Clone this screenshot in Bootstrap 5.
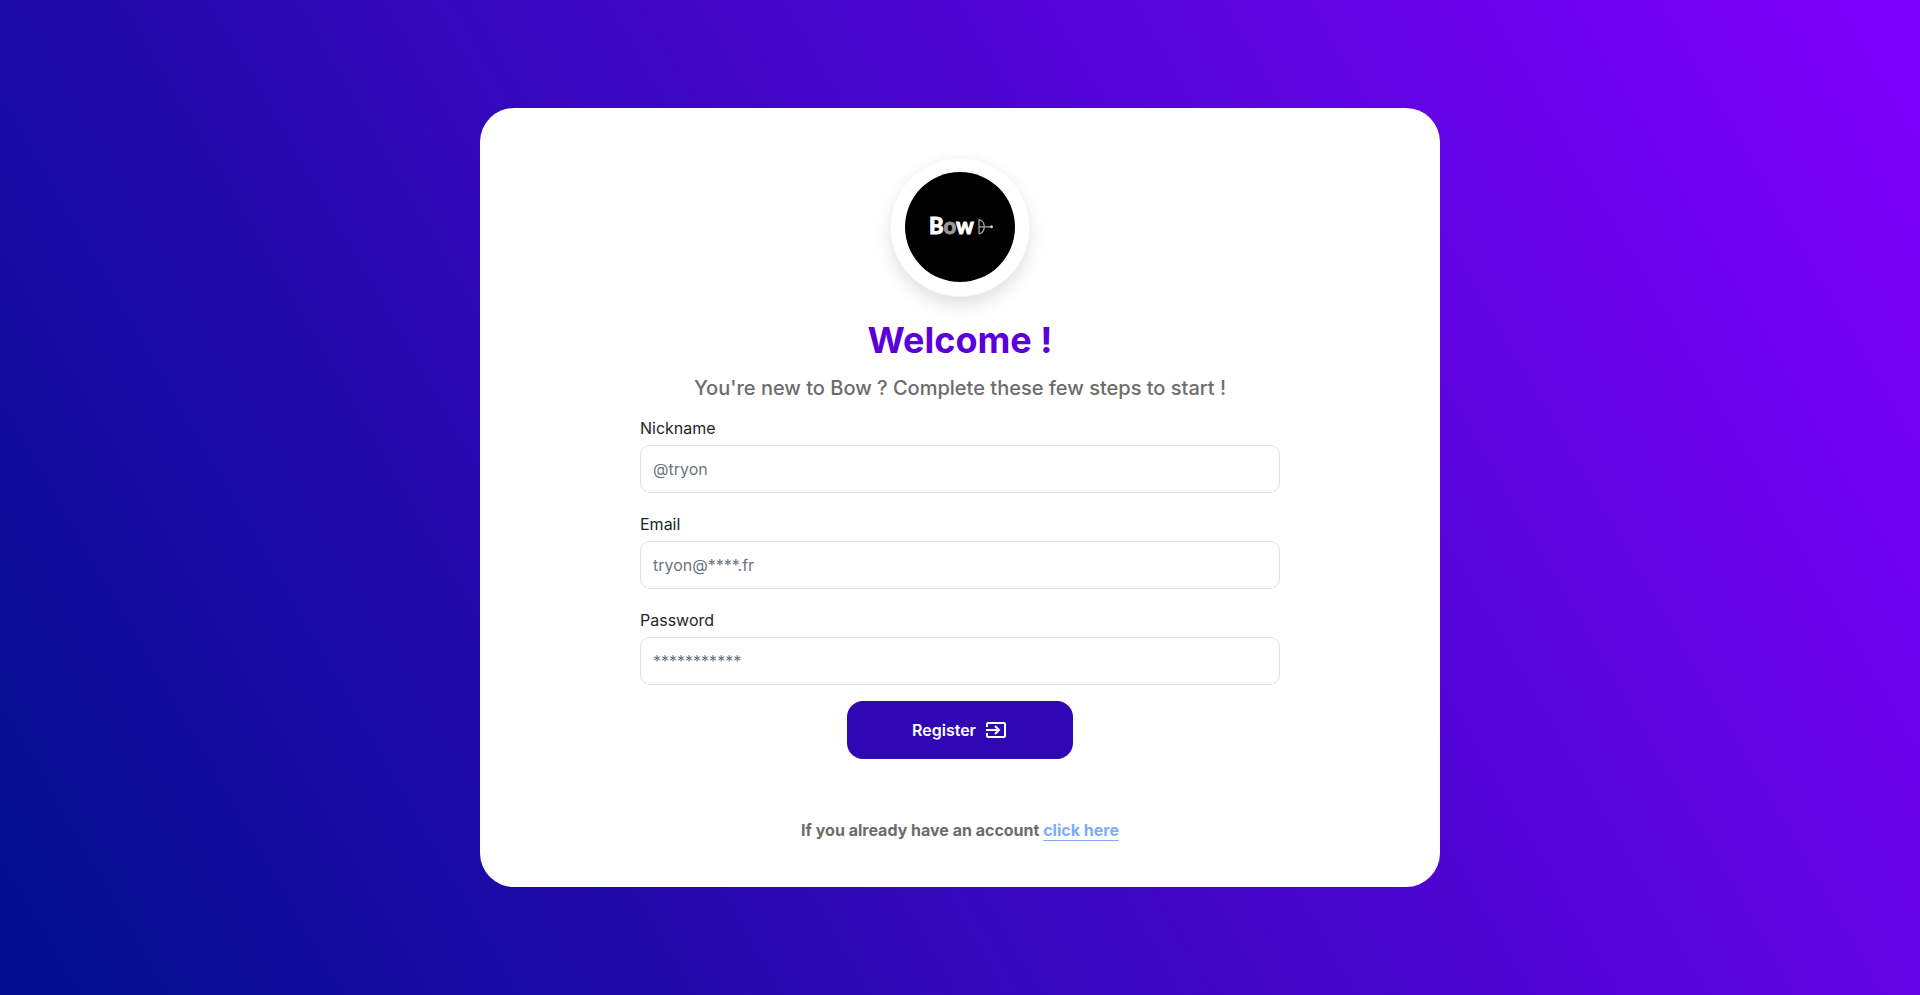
<!DOCTYPE html>
<html lang="en">
<head>
<meta charset="utf-8">
<meta name="viewport" content="width=device-width, initial-scale=1">
<title>Bow - Register</title>
<link href="https://cdn.jsdelivr.net/npm/bootstrap@5.3.0/dist/css/bootstrap.min.css" rel="stylesheet">
<style>
  body { font-family: Inter, sans-serif; background: linear-gradient(60deg, #000d8d, #8000ff) fixed; }
  .panel { border-radius: 34px; padding: 49px 0 45px; }
  .logo { width: 140px; height: 140px; padding: 14px; border: 1px solid #f6f6f6; box-shadow: 0 8px 16px rgba(0, 0, 0, .12); }
  .title { font-size: 36px; line-height: 44px; margin: 21px 0 14px; color: #5b00db; }
  .hint { font-size: 20px; line-height: 24px; color: #6c6c6c; }
  .fields { gap: 19px; }
  .fields .form-control { height: 48px; border-color: #dee2e6; border-radius: 10px; }
  .fields .form-control::placeholder { color: #6c757d; }
  .fields .form-label { margin-bottom: 5px; }
  .register { height: 58px; width: 226px; border-radius: 16px; --bs-btn-bg: #2f08b3; --bs-btn-color: #fff; --bs-btn-hover-bg: #5b00db; --bs-btn-hover-color: #fff; }
  .signin { margin-top: 59px; color: #6c6c6c; }
  .signin a { color: #7cacf8; text-decoration: underline 1px; text-underline-offset: 4px; text-decoration-skip-ink: none; }
</style>
</head>
<body>
<main class="container-fluid px-0 min-vh-100 d-flex align-items-center justify-content-center">
  <section class="panel col-6 bg-white d-flex flex-column align-items-center">
    <div class="logo rounded-circle bg-white">
      <svg class="d-block w-100 h-100" viewBox="0 0 110 110" role="img" aria-label="Bow">
        <circle cx="55" cy="55" r="55" fill="#000"/>
        <text x="24" y="62" font-family="Lato, sans-serif" font-size="22" font-weight="900" fill="#fff" stroke="#fff" stroke-width=".8">B<tspan fill="#999" stroke="#999">o</tspan>w</text>
        <g fill="none" stroke="#aaa" stroke-width="1.2">
          <path d="M74 47.500v14.500M74 47.500c7 2 7 12.500 0 14.500M74 54.800h12"/>
          <circle cx="86.500" cy="54.800" r="1.500" fill="#ccc" stroke="none"/>
        </g>
      </svg>
    </div>
    <h1 class="title fw-bold text-center">Welcome !</h1>
    <h2 class="hint fw-medium mb-3 text-center">You're new to Bow ? Complete these few steps to start !</h2>
    <form class="col-8 d-flex flex-column align-items-center">
      <div class="fields w-100 d-flex flex-column mb-3">
        <div><label class="form-label" for="nickname">Nickname</label><input class="form-control" id="nickname" type="text" placeholder="@tryon"></div>
        <div><label class="form-label" for="email">Email</label><input class="form-control" id="email" type="email" placeholder="tryon@****.fr"></div>
        <div><label class="form-label" for="password">Password</label><input class="form-control" id="password" type="password" placeholder="***********"></div>
      </div>
      <button class="register btn fw-semibold d-flex align-items-center justify-content-center gap-2" type="submit">Register
        <svg width="24" height="24" viewBox="0 0 24 24" fill="none" stroke="currentColor" stroke-width="2" aria-hidden="true"><path d="M3 9V6q0-1 1-1h16q1 0 1 1v12q0 1-1 1H4q-1 0-1-1v-3M2 12h13M11 8l4 4-4 4"/></svg>
      </button>
    </form>
    <p class="signin fw-bold mb-0">If you already have an account <a href="#">click here</a></p>
  </section>
</main>
<script src="https://cdn.jsdelivr.net/npm/bootstrap@5.3.0/dist/js/bootstrap.bundle.min.js"></script>
</body>
</html>
